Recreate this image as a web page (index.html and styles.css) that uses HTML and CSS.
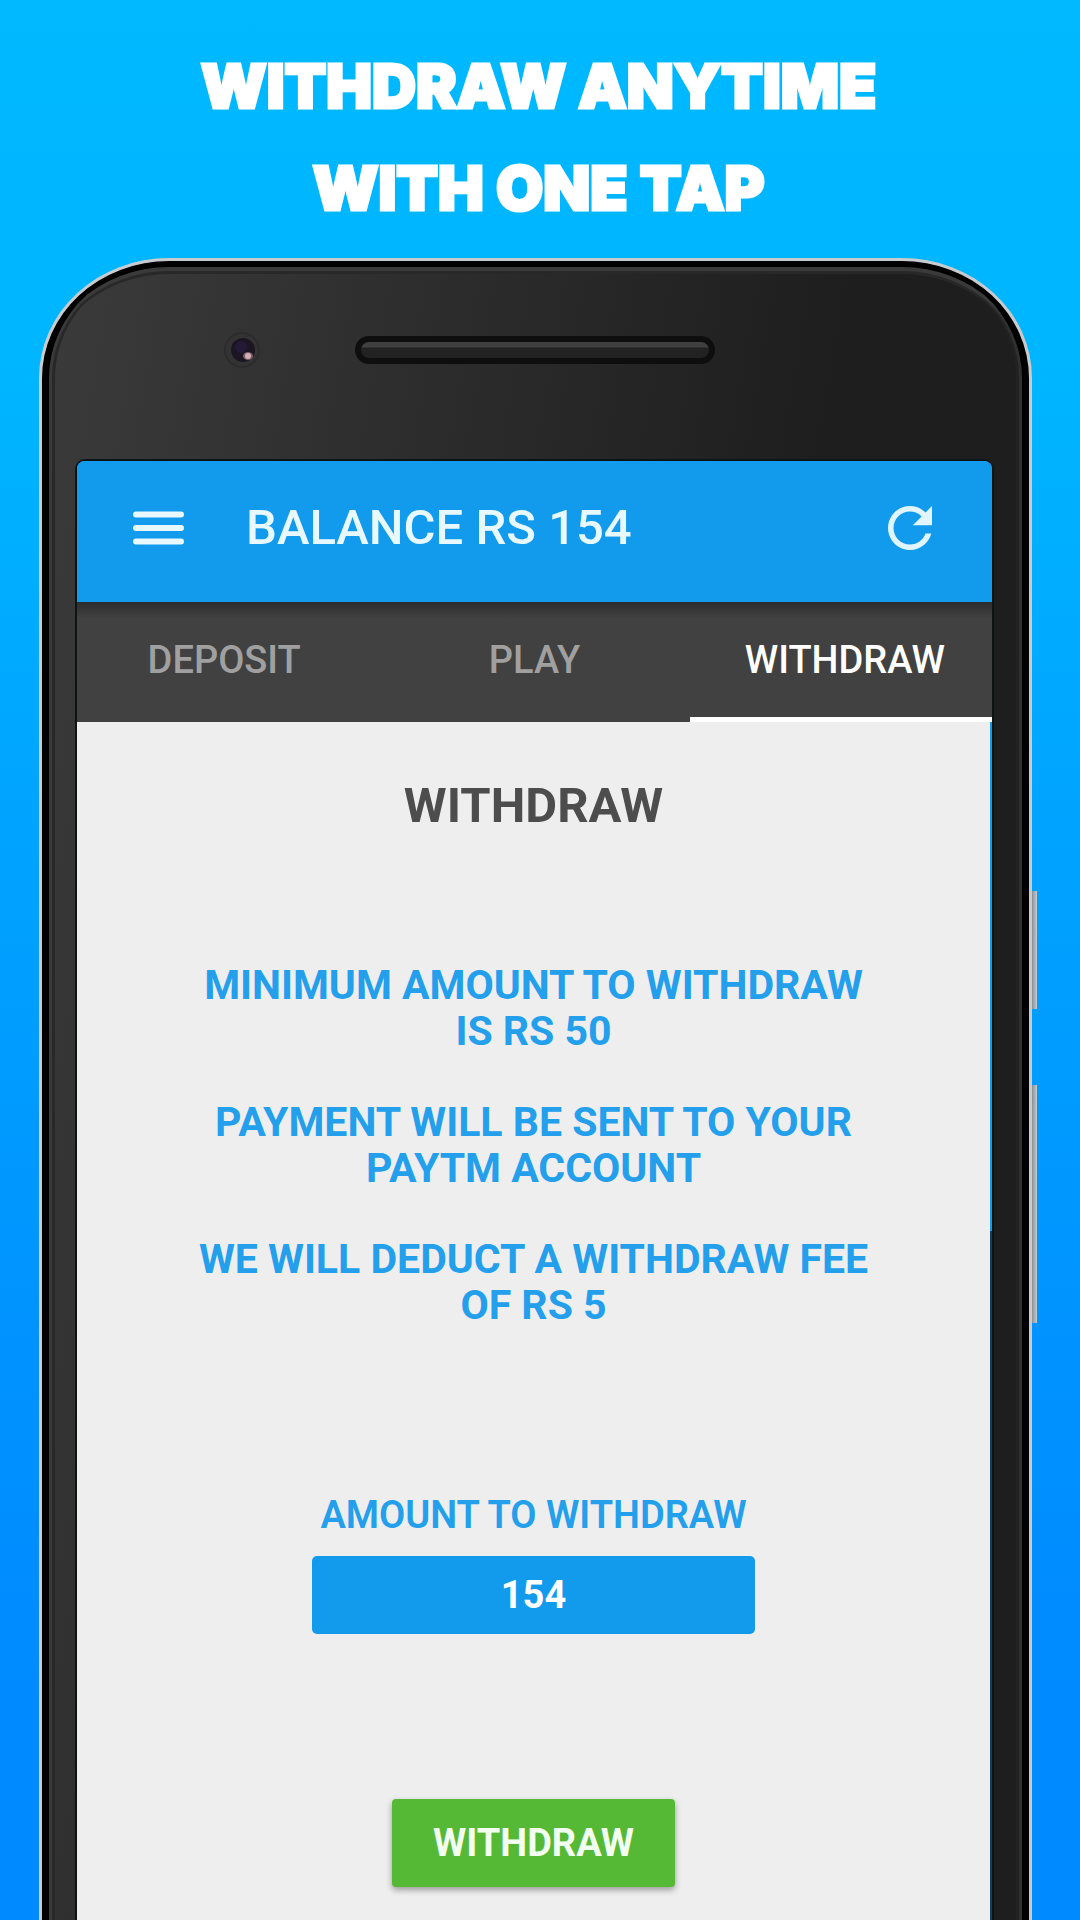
FILE: index.html
```html
<!DOCTYPE html>
<html lang="en">
<head>
    <meta charset="UTF-8">
    <meta name="viewport" content="width=device-width, initial-scale=1.0">
    <title>Withdraw</title>
    <link rel="stylesheet" href="styles.css">
</head>
<body>
    <h1 class="headline">WITHDRAW ANYTIME<br>WITH ONE TAP</h1>

    <div class="phone">
        <span class="side-btn power"></span>
        <span class="side-btn volume"></span>

        <div class="bezel">
            <svg class="camera" viewBox="0 0 40 40" aria-hidden="true">
                <circle cx="20" cy="20" r="17" fill="#333" stroke="#2c2c2c" stroke-width="2" />
                <circle cx="21" cy="20" r="12" fill="#1c1622" />
                <circle cx="19" cy="17" r="6" fill="#241a36" />
                <ellipse cx="26" cy="26" rx="5" ry="4" fill="#7d5f6c" />
                <circle cx="26" cy="26" r="3" fill="#d3aeb2" />
            </svg>
            <div class="speaker"></div>
        </div>

        <div class="screen">
            <header class="app-bar">
                <button class="icon-btn" aria-label="Menu">
                    <svg class="menu-icon" viewBox="0 0 51 34" aria-hidden="true">
                        <path d="M3 3.5H48M3 17H48M3 30.5H48" stroke="#e8f8ff" stroke-width="6" stroke-linecap="round" />
                    </svg>
                </button>
                <h2 class="balance">BALANCE RS 154</h2>
                <button class="icon-btn" aria-label="Refresh">
                    <svg class="refresh-icon" viewBox="4 4 16 16" aria-hidden="true">
                        <path fill="#e0f5ff" d="M17.65 6.35C16.2 4.9 14.21 4 12 4c-4.42 0-7.99 3.58-7.99 8s3.57 8 7.99 8c3.73 0 6.84-2.55 7.73-6h-2.08c-.82 2.33-3.04 4-5.65 4-3.31 0-6-2.69-6-6s2.69-6 6-6c1.66 0 3.14.69 4.22 1.78L13 11h7V4l-2.35 2.35z" />
                    </svg>
                </button>
            </header>

            <nav class="tabs">
                <a class="tab" href="#deposit">DEPOSIT</a>
                <a class="tab" href="#play">PLAY</a>
                <a class="tab active" href="#withdraw">WITHDRAW</a>
            </nav>

            <main class="content" id="withdraw">
                <h3 class="title">WITHDRAW</h3>
                <div class="notes">
                    <p>MINIMUM AMOUNT TO WITHDRAW<br>IS RS 50</p>
                    <p>PAYMENT WILL BE SENT TO YOUR<br>PAYTM ACCOUNT</p>
                    <p>WE WILL DEDUCT A WITHDRAW FEE<br>OF RS 5</p>
                </div>
                <form class="form">
                    <label class="label" for="amount">AMOUNT TO WITHDRAW</label>
                    <input class="amount" id="amount" type="text" inputmode="numeric" value="154">
                    <button class="submit" type="button">WITHDRAW</button>
                </form>
            </main>
        </div>
    </div>
</body>
</html>
```

FILE: styles.css
```css
* {
    box-sizing: border-box;
}
body {
    margin: 0;
    min-height: 100vh;
    padding: 35px 48px 0 39px;
    display: flex;
    flex-direction: column;
    background: linear-gradient(#00b9ff 0%, #00b5ff 20%, #00a4ff 42%, #0094ff 68%, #008aff 88%, #008aff 100%);
    font-family: Roboto, sans-serif;
    overflow-x: hidden;
}
.headline {
    margin: 0 0 19px;
    padding-left: 6px;
    color: #fff;
    font-family: Inter, sans-serif;
    font-size: 61px;
    font-weight: 900;
    line-height: 102px;
    text-align: center;
    -webkit-text-stroke: 3px #fff;
}
.phone {
    position: relative;
    flex: 1;
    display: flex;
    flex-direction: column;
    padding: 0 37px 0 35px;
    border: 3px solid #c9cccf;
    border-bottom: 0;
    border-radius: 130px 130px 0 0 / 120px 120px 0 0;
    background: linear-gradient(100deg, #3b3b3b 0, #1e1e1e 800px);
    box-shadow: inset 0 6px 0 #000, inset 7px 0 0 #000, inset -7px 0 0 #000, inset 0 10px 0 #3a3a3a, inset 10px 0 0 #3a3a3a, inset -10px 0 0 #303030, inset 0 13px 0 #282828, inset 13px 0 0 #282828, inset -13px 0 0 #222;
}
.side-btn {
    position: absolute;
    right: -8px;
    width: 5px;
    background: linear-gradient(90deg, #8b8f94, #c3cdd2);
}
.power {
    top: 630px;
    height: 118px;
}
.volume {
    top: 824px;
    height: 238px;
}
.bezel {
    height: 200px;
    display: flex;
    align-items: center;
    padding: 0 0 22px 145px;
}
.camera {
    width: 40px;
    height: 40px;
}
.speaker {
    width: 360px;
    height: 28px;
    margin-left: 93px;
    border: 6px solid #0e0e0e;
    border-radius: 14px;
    background: linear-gradient(#404040 0 5px, #222 6px);
}
.screen {
    flex: 1;
    display: flex;
    flex-direction: column;
    padding-right: 2px;
    border-radius: 8px 8px 0 0;
    overflow: hidden;
    background: linear-gradient(#129aec 770px, #103f66 770px);
    box-shadow: 0 0 0 2px #0d1416;
}
.app-bar {
    display: flex;
    align-items: center;
    height: 141px;
    margin-right: -2px;
    padding: 0 52px 8px 48px;
    background: #129aec;
    color: #e8f8ff;
}
.icon-btn {
    display: flex;
    padding: 8px;
    border: 0;
    background: none;
    cursor: pointer;
}
.menu-icon {
    width: 51px;
    height: 34px;
}
.refresh-icon {
    width: 44px;
    height: 44px;
}
.balance {
    flex: 1;
    margin: 0 0 0 54px;
    font-size: 49px;
    font-weight: 500;
    line-height: 56px;
}
.tabs {
    display: grid;
    grid-template-columns: repeat(3, 1fr);
    height: 120px;
    margin: 0 -10px 0 -8px;
    background: linear-gradient(#2c2c2c, #414141 16px);
}
.tab {
    display: flex;
    align-items: center;
    justify-content: center;
    border-bottom: 5px solid transparent;
    color: #a0a0a0;
    font-size: 38px;
    font-weight: 500;
    text-decoration: none;
}
.tab.active {
    color: #fff;
    border-bottom-color: #fff;
}
.content {
    flex: 1;
    display: flex;
    flex-direction: column;
    align-items: center;
    padding-top: 56px;
    background: #eee;
    text-align: center;
}
.title {
    margin: 0;
    color: #4d4d4d;
    font-size: 49px;
    font-weight: 700;
    line-height: 56px;
}
.notes {
    margin-top: 128px;
    color: #239fec;
    font-size: 41px;
    font-weight: 700;
    line-height: 46px;
}
.notes p {
    margin: 0 0 45px;
}
.form {
    display: flex;
    flex-direction: column;
    align-items: center;
    margin-top: 121px;
}
.label {
    color: #239fec;
    font-size: 38px;
    font-weight: 600;
    line-height: 42px;
}
.amount {
    width: 443px;
    height: 78px;
    margin-top: 20px;
    border: 0;
    border-radius: 5px;
    background: #129aec;
    color: #fff;
    font-family: inherit;
    font-size: 38px;
    font-weight: 700;
    text-align: center;
}
.submit {
    width: 283px;
    height: 88px;
    margin: 165px 0 32px;
    border: 0;
    border-radius: 4px;
    background: #56b936;
    color: #f2fff0;
    font-family: inherit;
    font-size: 38px;
    font-weight: 700;
    box-shadow: 0 3px 6px rgba(0, 0, 0, 0.35);
    cursor: pointer;
}
```
